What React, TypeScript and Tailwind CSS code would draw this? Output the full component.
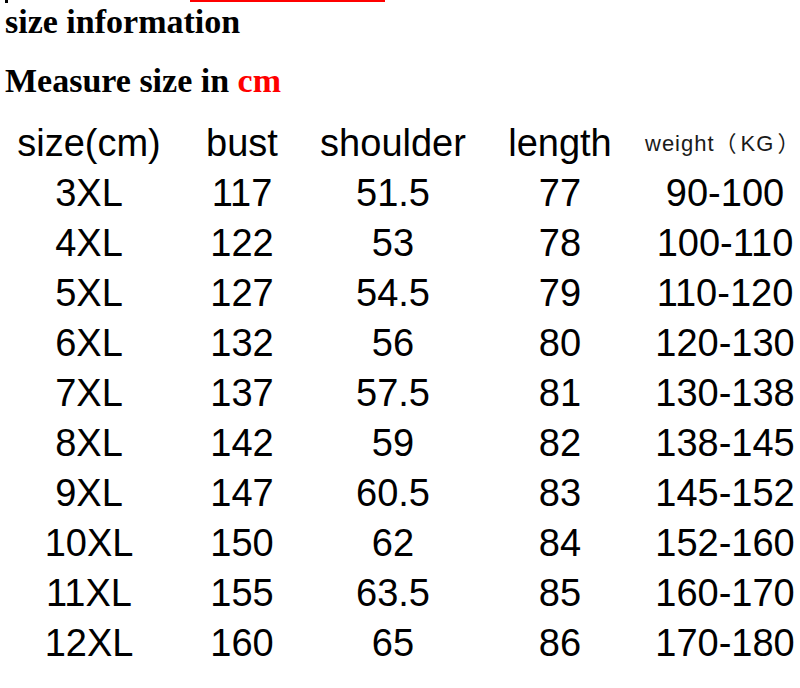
const rows: [string, string, string, string, string][] = [
  ["3XL", "117", "51.5", "77", "90-100"],
  ["4XL", "122", "53", "78", "100-110"],
  ["5XL", "127", "54.5", "79", "110-120"],
  ["6XL", "132", "56", "80", "120-130"],
  ["7XL", "137", "57.5", "81", "130-138"],
  ["8XL", "142", "59", "82", "138-145"],
  ["9XL", "147", "60.5", "83", "145-152"],
  ["10XL", "150", "62", "84", "152-160"],
  ["11XL", "155", "63.5", "85", "160-170"],
  ["12XL", "160", "65", "86", "170-180"],
]

const grid = "grid grid-cols-[178px_128px_174px_160px_1fr] h-[50px] leading-[50px] text-center"

export default function App() {
  return (
    <main className="w-[800px] h-[688px] overflow-hidden bg-white text-black">
      {/* cut-off line from above */}
      <div className="flex h-[3px] items-start">
        <div className="ml-[5px] h-[3px] w-[3px] bg-black" />
        <div className="ml-[182px] h-[2px] w-[195px] bg-[#f00]" />
      </div>

      <h2 className="pl-[5px] font-['Liberation_Serif',serif] font-bold text-[34px] leading-[38px]">
        size information
      </h2>
      <h3 className="mt-[21px] pl-[5px] font-['Liberation_Serif',serif] font-bold text-[34px] leading-[38px]">
        Measure size in <span className="text-[#f00]">cm</span>
      </h3>

      {/* size table */}
      <div className="mt-[18px] font-['Liberation_Sans',Arial,sans-serif] text-[38px]">
        <div className={grid}>
          <div>size(cm)</div>
          <div>bust</div>
          <div>shoulder</div>
          <div>length</div>
          <div className="whitespace-nowrap pl-[5px] pt-[1px] text-left text-[22px] font-['Liberation_Sans','Noto_Sans_CJK_SC',sans-serif] text-[#1a1a1a]">
            <span className="tracking-[1px]">weight</span>（<span className="ml-[4px] tracking-[1px]">KG</span><span className="ml-[3px]">）</span>
          </div>
        </div>
        {rows.map((r) => (
          <div key={r[0]} className={grid}>
            <div>{r[0]}</div>
            <div>{r[1]}</div>
            <div>{r[2]}</div>
            <div>{r[3]}</div>
            <div className="pl-[10px]">{r[4]}</div>
          </div>
        ))}
      </div>
    </main>
  )
}
